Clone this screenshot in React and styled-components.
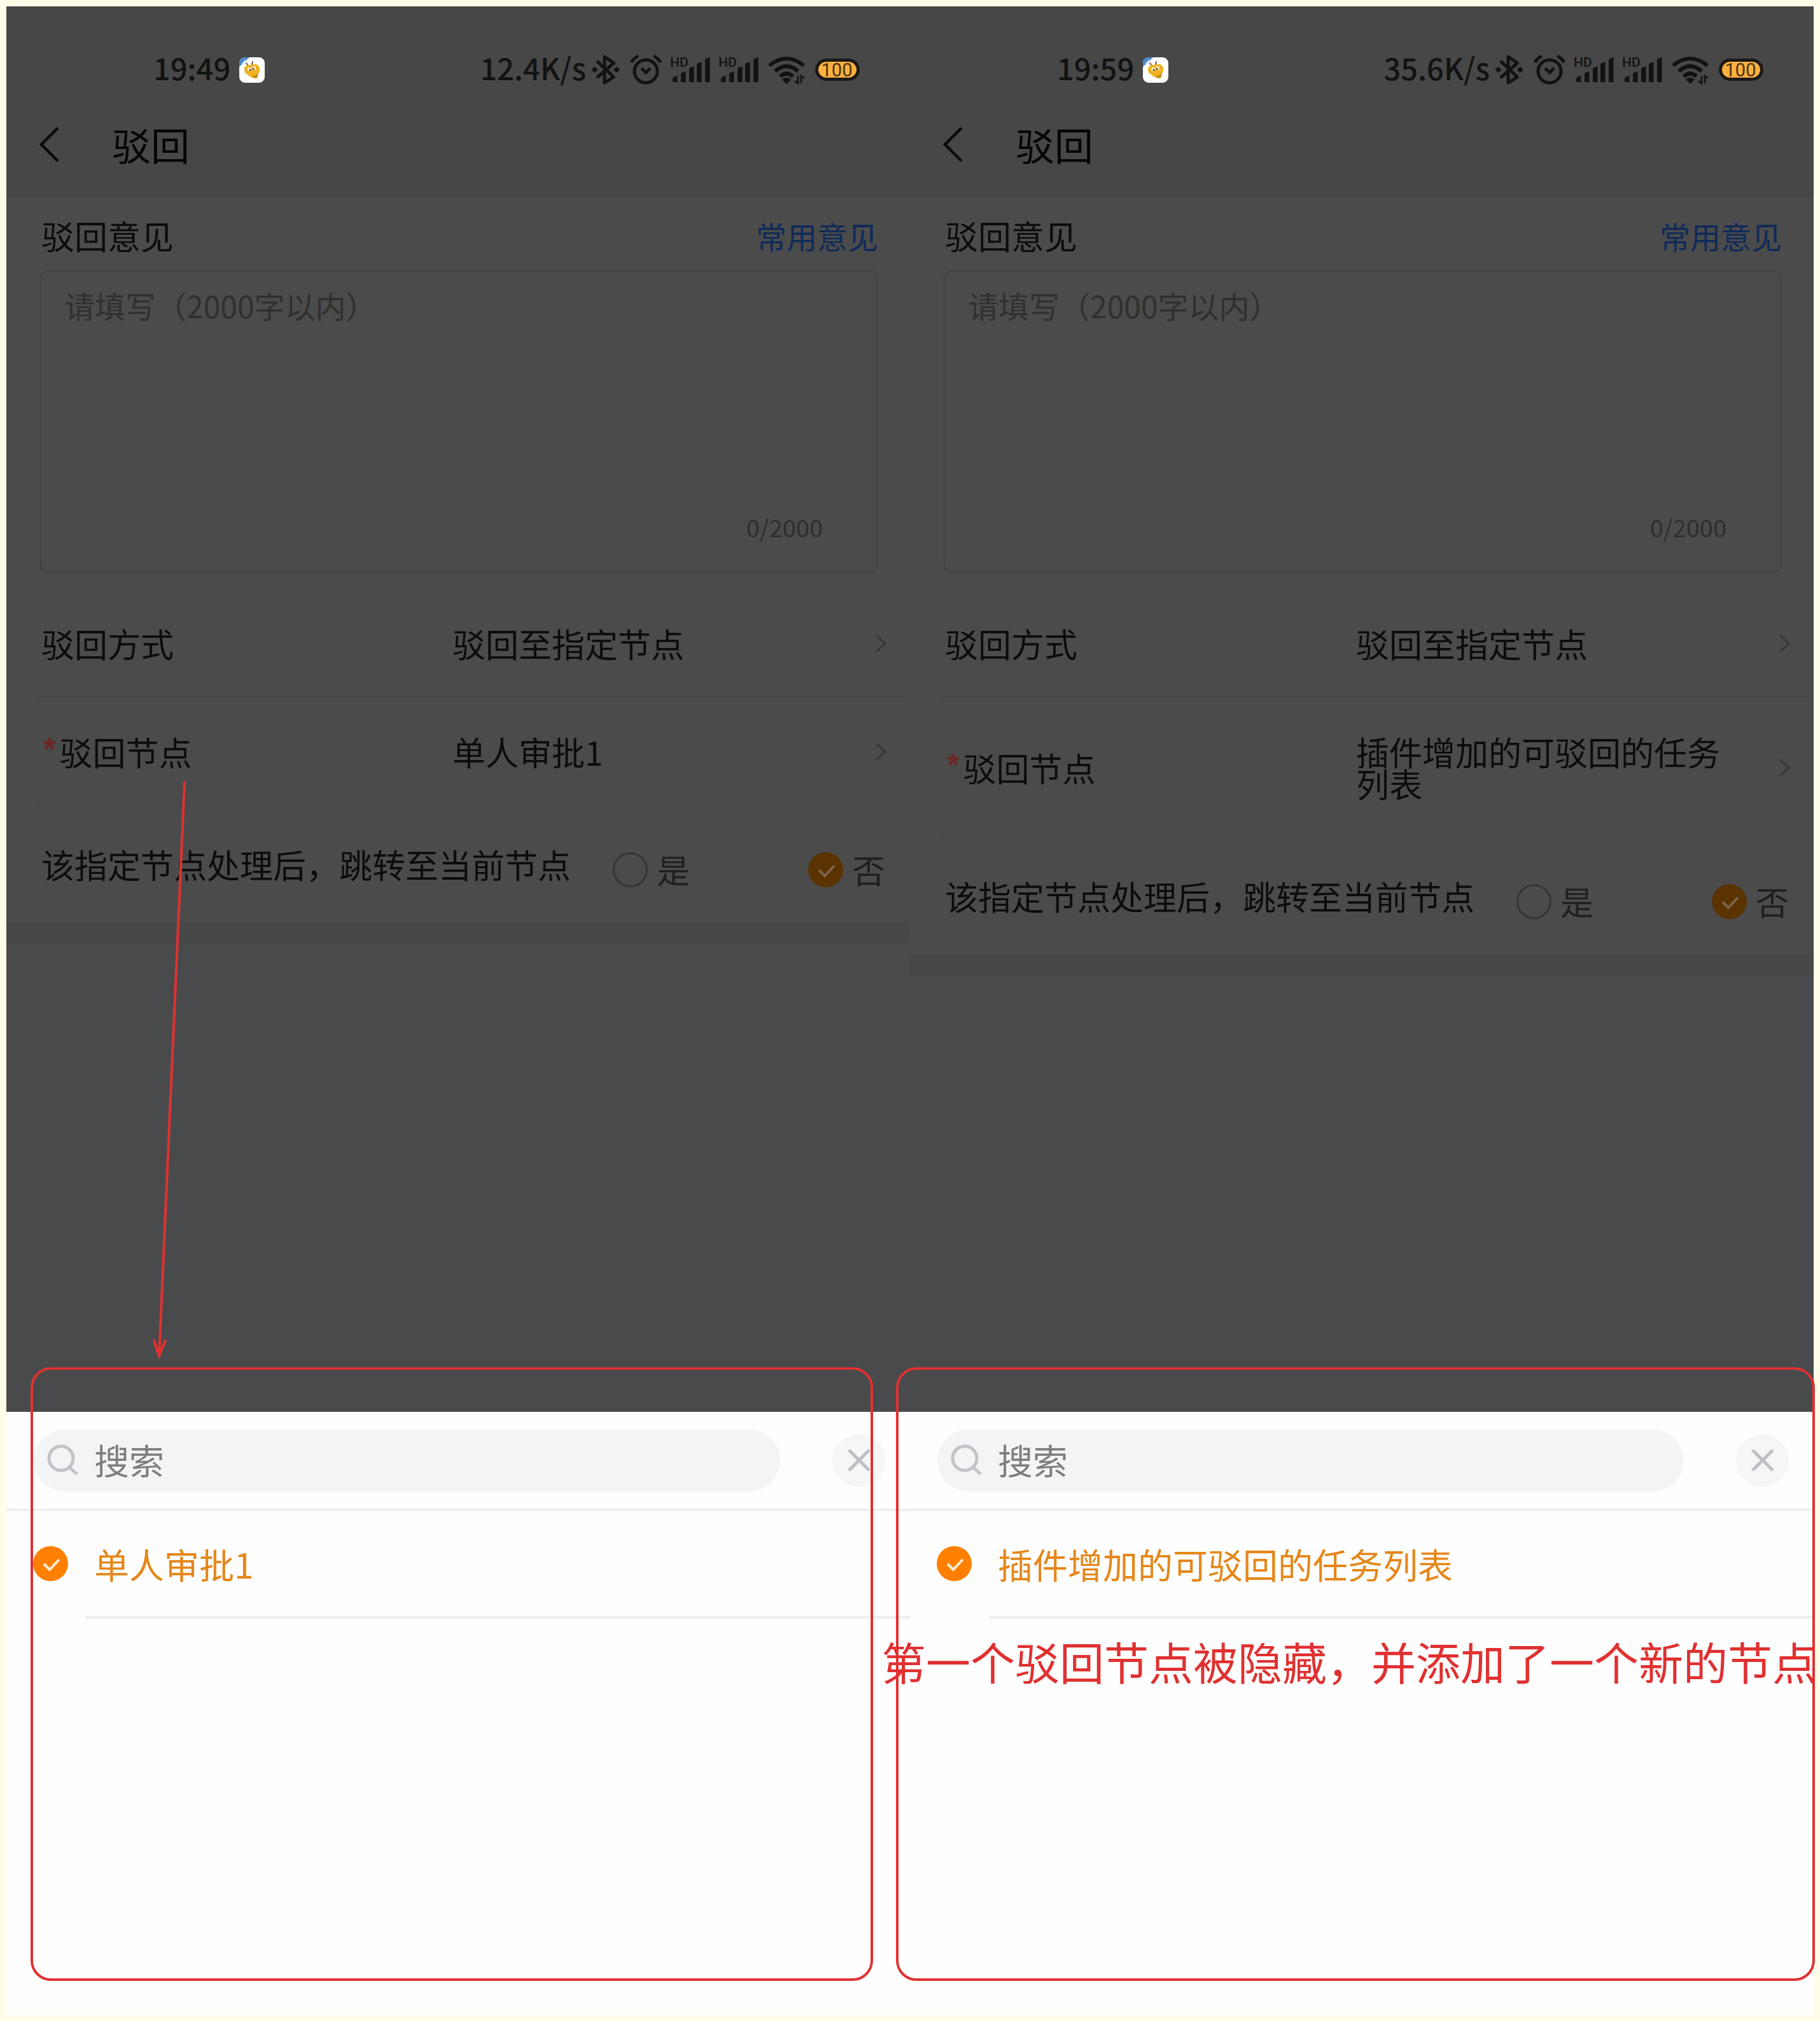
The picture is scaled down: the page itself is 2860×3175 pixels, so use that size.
import React, { useState } from 'react';
import styled, { createGlobalStyle } from 'styled-components';

const GlobalStyle = createGlobalStyle`
  * {
    box-sizing: border-box;
  }

  body {
    margin: 0;
    background: #fffde7;
    font-family: "Noto Sans CJK SC", sans-serif;
  }

  button, input, textarea {
    font-family: inherit;
    margin: 0;
  }
`;

const Board = styled.main`
  display: grid;
  grid-template-columns: 1fr 1fr;
  min-height: 100vh;
  padding: 10px 10px 9px;
`;

const Phone = styled.section`
  position: relative;
  display: flex;
  flex-direction: column;
  min-width: 0;
  background: #494a4c;
`;

const Header = styled.header`
  background: #474747;
`;

const StatusBar = styled.div`
  display: flex;
  align-items: center;
  justify-content: space-between;
  height: 142px;
  padding: 57px 78px 0 231px;
`;

const StatusGroup = styled.div`
  display: flex;
  align-items: center;
  gap: ${({ $gap }) => $gap}px;
  color: #121212;
`;

const StatusText = styled.span`
  padding-bottom: 8px;
  font-size: 47px;
  font-weight: 500;
  line-height: 60px;
`;

const StatusIcons = styled.div`
  display: flex;
  align-items: center;
  gap: 14px;

  svg {
    display: block;
    flex: none;
  }
`;

const TitleBar = styled.div`
  display: flex;
  align-items: center;
  height: 158px;
  padding: 0 0 8px 51px;
`;

const BackButton = styled.button`
  display: flex;
  padding: 0;
  border: 0;
  background: none;
  color: #0a0a0a;
`;

const TitleDivider = styled.span`
  width: 2px;
  height: 60px;
  margin: 0 27px 0 53px;
  background: #424242;
`;

const Title = styled.h1`
  margin: 0;
  color: #050505;
  font-size: 61px;
  font-weight: 400;
  line-height: 72px;
`;

const FormPanel = styled.form`
  border-bottom: 32px solid #474747;
  background: #4b4b4b;
`;

const OpinionHead = styled.div`
  display: flex;
  align-items: center;
  justify-content: space-between;
  height: 114px;
  padding: 6px 50px 0 55px;
`;

const OpinionLabel = styled.label`
  color: #0c0c0c;
  font-size: 52px;
  line-height: 60px;
`;

const CommonLink = styled.button`
  padding: 0;
  border: 0;
  background: none;
  color: #0e2a59;
  font-size: 48px;
  line-height: 60px;
`;

const OpinionBox = styled.div`
  display: flex;
  flex-direction: column;
  height: 476px;
  margin: 0 50px 26px 52px;
  padding: 22px 84px 44px 36px;
  border: 3px solid #444;
  border-radius: 14px;
`;

const OpinionInput = styled.textarea`
  flex: 1;
  padding: 0;
  border: 0;
  outline: 0;
  resize: none;
  background: none;
  color: #0c0c0c;
  font-size: 48px;
  line-height: 60px;

  &::placeholder {
    color: #303030;
    opacity: 1;
  }
`;

const Counter = styled.span`
  align-self: flex-end;
  color: #2e2e2e;
  font-size: 38px;
  line-height: 50px;
`;

const PickerRow = styled.button`
  display: grid;
  grid-template-columns: minmax(0, 646px) 1fr auto;
  align-items: center;
  width: calc(100% - 48px);
  margin-left: 48px;
  padding: 60px 36px 58px 7px;
  border: 0;
  border-bottom: 2px solid #454545;
  background: none;
  color: #0c0c0c;
  font-size: 52px;
  line-height: 50px;
  text-align: left;
`;

const PickerLabel = styled.span`
  display: flex;
  align-items: center;
  gap: 6px;
`;

const Required = styled.span`
  padding: 0 0 8px 3px;
  color: #6b2626;
  font-family: "Liberation Sans", sans-serif;
  font-size: 50px;
  font-weight: 700;
  line-height: 42px;
`;

const PickerValue = styled.span`
  padding-right: 60px;
`;

const JumpRow = styled.fieldset`
  display: flex;
  align-items: flex-start;
  height: 183px;
  margin: 0;
  padding: 67px 39px 0 55px;
  border: 0;
`;

const JumpText = styled.span`
  color: #0c0c0c;
  font-size: 52px;
  line-height: 50px;
  white-space: nowrap;
`;

const JumpChoices = styled.div`
  display: flex;
  flex: 1;
  justify-content: space-between;
  margin: 5px 0 0 66px;
`;

const Choice = styled.label`
  display: flex;
  align-items: center;
  gap: 14px;
  color: #1f1f1f;
  font-size: 52px;
  line-height: 56px;
`;

const RadioWrap = styled.span`
  position: relative;
  display: flex;
  flex: none;
  width: 55px;
  height: 55px;

  svg {
    position: absolute;
    inset: 0;
    pointer-events: none;
  }
`;

const RadioInput = styled.input`
  appearance: none;
  width: 55px;
  height: 55px;
  border: 3px solid #353535;
  border-radius: 50%;

  &:checked {
    border: 0;
    background: ${({ $fill }) => $fill};
  }
`;

const Sheet = styled.div`
  position: relative;
  min-height: 948px;
  margin-top: auto;
  background: #fefefe;
`;

const SearchRow = styled.div`
  display: flex;
  align-items: center;
  gap: 82px;
  height: 156px;
  padding: 0 39px 0 43px;
  border-bottom: 4px solid #eee;
`;

const SearchBox = styled.label`
  display: flex;
  flex: 1;
  align-items: center;
  gap: 25px;
  height: 97px;
  padding: 0 40px 0 21px;
  border-radius: 49px;
  background: #f3f4f6;
`;

const SearchInput = styled.input`
  flex: 1;
  min-width: 0;
  height: 70px;
  padding: 0 0 4px;
  border: 0;
  outline: 0;
  background: none;
  color: #333;
  font-size: 55px;
  line-height: 66px;

  &::placeholder {
    color: #7c7e80;
    opacity: 1;
  }
`;

const CloseButton = styled.button`
  display: flex;
  align-items: center;
  justify-content: center;
  width: 83px;
  height: 83px;
  padding: 0;
  border: 0;
  border-radius: 50%;
  background: #f6f6f6;
`;

const Option = styled.label`
  display: flex;
  align-items: center;
  gap: 41px;
  height: 165px;
  padding-left: 42px;
  color: #e5871a;
  font-size: 55px;
  line-height: 70px;
`;

const OptionText = styled.span`
  padding-bottom: 2px;
`;

const OptionDivider = styled.hr`
  height: 4px;
  margin: 0 0 0 124px;
  border: 0;
  background: #eee;
`;

/* red markup drawn over the two screens */
const Frame = styled.div`
  position: absolute;
  top: -70px;
  right: ${({ $right }) => $right}px;
  bottom: 54px;
  left: ${({ $left }) => $left}px;
  border: 4px solid #e03131;
  border-radius: 32px;
  pointer-events: none;
`;

/* runs from the node row down to the sheet, so it starts above the sheet's top edge */
const Arrow = styled.svg`
  position: absolute;
  top: -998px;
  left: 220px;
  pointer-events: none;
`;

const Note = styled.p`
  position: absolute;
  top: 347px;
  left: -45px;
  margin: 0;
  color: #e03131;
  font-size: 70px;
  line-height: 90px;
  white-space: nowrap;
`;

const AppBadge = () => (
  <svg width="40" height="40" viewBox="0 0 40 40">
    <defs>
      <clipPath id="badge">
        <rect width="40" height="40" rx="9" />
      </clipPath>
    </defs>
    <g clipPath="url(#badge)">
      <rect width="40" height="40" fill="#fff" />
      <path d="M0 0H16L0 15Z" fill="#4a86cf" />
      <path d="M4 10L10 4" stroke="#a9c8ec" strokeWidth="2" />
      <path d="M13 12L11 9M20 11L21 7" stroke="#6b5a4a" strokeWidth="2" strokeLinecap="round" />
      <path
        d="M8 19C8 13 14 11 20 12C23 10 31 10 32 17C33 22 30 25 29 28C30 32 26 34 22 32C18 32 15 29 13 27C10 26 8 23 8 19Z"
        fill="#f0b322"
      />
      <path d="M20 30C24 29 28 27 30 24C29 28 30 32 26 33C23 33 21 32 20 30Z" fill="#c98c14" />
      <circle cx="16" cy="19" r="3" fill="#fff3cf" />
      <circle cx="23" cy="17" r="3" fill="#fff3cf" />
      <circle cx="17" cy="20" r="1.5" fill="#4b3410" />
      <circle cx="22" cy="18" r="1.5" fill="#4b3410" />
    </g>
  </svg>
);

const BluetoothIcon = () => (
  <svg width="46" height="50" viewBox="0 0 46 50" fill="none" stroke="currentColor" strokeWidth="5">
    <path d="M8 11L34.5 36L20 45V4L34.5 14L8 37" strokeLinejoin="round" />
    <path d="M4.5 19.5L9.5 24.5L4.5 29.5L-.5 24.5ZM39 19.500L44 24.500L39 29.500L34 24.500Z" fill="currentColor" stroke="none" />
  </svg>
);

const AlarmIcon = () => (
  <svg width="50" height="50" viewBox="0 0 50 50" fill="none" stroke="currentColor" strokeWidth="5">
    <circle cx="25" cy="27" r="18" />
    <path d="M18 22L25 29L32 22" />
    <path d="M2 13Q6 6 13 3M48 13Q44 6 37 3" />
  </svg>
);

const SignalIcon = () => (
  <svg width="62" height="50" viewBox="0 0 62 50" fill="currentColor">
    <text x="-1" y="20" fontFamily="Roboto, sans-serif" fontSize="21" fontWeight="500">HD</text>
    <path d="M3 44V38Q3 36 10.500 34V44ZM16 44V30L23.500 27V44ZM29 44V22L36.500 19V44ZM41 44V15L48.500 12V44ZM54 44V8L61.500 5V44Z" />
  </svg>
);

const WifiIcon = () => (
  <svg width="60" height="50" viewBox="0 0 60 50" fill="none" stroke="currentColor" strokeWidth="6">
    <path d="M3 18Q30 -4 57 18M12 27Q30 11 48 27M20 35Q30 26 40 35" />
    <path d="M23 40Q30 34 37 40L30 47Z" fill="currentColor" stroke="none" />
    <path d="M48 34V46L43 42M53 46V34L58 38" strokeWidth="2.5" />
  </svg>
);

const BatteryIcon = () => (
  <svg width="72" height="50" viewBox="0 0 72 50">
    <rect x="3.500" y="9.500" width="65" height="30" rx="15" fill="#fbb040" stroke="#1b1917" strokeWidth="5" />
    <text x="35" y="35" textAnchor="middle" fontFamily="Roboto, sans-serif" fontSize="29" fill="#4a3210">
      100
    </text>
  </svg>
);

const Chevron = () => (
  <svg width="20" height="32" viewBox="0 0 20 32" fill="none" stroke="#363636" strokeWidth="3">
    <path d="M3 3L17 16L3 29" />
  </svg>
);

const SearchIcon = () => (
  <svg width="49" height="50" viewBox="0 0 49 50" fill="none" stroke="#c1c3c9" strokeWidth="5">
    <circle cx="22" cy="22" r="19" />
    <path d="M35 36L47 47" />
  </svg>
);

const CloseIcon = () => (
  <svg width="36" height="36" viewBox="0 0 36 36" stroke="#bdbfc4" strokeWidth="5">
    <path d="M2 2L34 34M34 2L2 34" />
  </svg>
);

const Radio = ({ fill, tick, checked, ...rest }) => (
  <RadioWrap>
    <RadioInput type="radio" $fill={fill} checked={checked} {...rest} />
    {checked && (
      <svg width="55" height="55" viewBox="0 0 55 55" fill="none" stroke={tick} strokeWidth="4">
        <path d="M17 28L26 37L41 21" />
      </svg>
    )}
  </RadioWrap>
);

const RejectScreen = ({ id, time, speed, node, children, frame }) => {
  const [jump, setJump] = useState('no');
  const [opinion, setOpinion] = useState('');

  return (
    <Phone>
      <Header>
        <StatusBar>
          <StatusGroup $gap={14}>
            <StatusText>{time}</StatusText>
            <AppBadge />
          </StatusGroup>
          <StatusGroup $gap={9}>
            <StatusText>{speed}</StatusText>
            <StatusIcons>
              <BluetoothIcon />
              <AlarmIcon />
              <SignalIcon />
              <SignalIcon />
              <WifiIcon />
              <BatteryIcon />
            </StatusIcons>
          </StatusGroup>
        </StatusBar>
        <TitleBar>
          <BackButton type="button" aria-label="返回">
            <svg width="33" height="56" viewBox="0 0 33 56" fill="none" stroke="currentColor" strokeWidth="4.5">
              <path d="M30 2L4 28L30 54" />
            </svg>
          </BackButton>
          <TitleDivider />
          <Title>驳回</Title>
        </TitleBar>
      </Header>

      <FormPanel onSubmit={e => e.preventDefault()}>
        <OpinionHead>
          <OpinionLabel htmlFor={`${id}-opinion`}>驳回意见</OpinionLabel>
          <CommonLink type="button">常用意见</CommonLink>
        </OpinionHead>
        <OpinionBox>
          <OpinionInput
            id={`${id}-opinion`}
            maxLength={2000}
            placeholder="请填写（2000字以内）"
            value={opinion}
            onChange={e => setOpinion(e.target.value)}
          />
          <Counter>{opinion.length}/2000</Counter>
        </OpinionBox>

        <PickerRow type="button">
          <PickerLabel>驳回方式</PickerLabel>
          <PickerValue>驳回至指定节点</PickerValue>
          <Chevron />
        </PickerRow>
        <PickerRow type="button">
          <PickerLabel>
            <Required>*</Required>
            驳回节点
          </PickerLabel>
          <PickerValue>{node}</PickerValue>
          <Chevron />
        </PickerRow>

        <JumpRow aria-labelledby={`${id}-jump`}>
          <JumpText id={`${id}-jump`}>该指定节点处理后，跳转至当前节点</JumpText>
          <JumpChoices>
            <Choice>
              <Radio
                name={`${id}-jump`}
                fill="#5a3300"
                tick="#7d6350"
                checked={jump === 'yes'}
                onChange={() => setJump('yes')}
              />
              是
            </Choice>
            <Choice>
              <Radio
                name={`${id}-jump`}
                fill="#5a3300"
                tick="#7d6350"
                checked={jump === 'no'}
                onChange={() => setJump('no')}
              />
              否
            </Choice>
          </JumpChoices>
        </JumpRow>
      </FormPanel>

      <Sheet>
        <SearchRow>
          <SearchBox>
            <SearchIcon />
            <SearchInput type="text" placeholder="搜索" aria-label="搜索" />
          </SearchBox>
          <CloseButton type="button" aria-label="关闭">
            <CloseIcon />
          </CloseButton>
        </SearchRow>
        <Option>
          <Radio name={`${id}-node`} fill="#ff8000" tick="#fff0d8" checked readOnly />
          <OptionText>{node}</OptionText>
        </Option>
        <OptionDivider />
        <Frame $left={frame.left} $right={frame.right} />
        {children}
      </Sheet>
    </Phone>
  );
};

const App = () => {
  return (
    <>
      <GlobalStyle />
      <Board>
        <RejectScreen id="before" time="19:49" speed="12.4K/s" node="单人审批1" frame={{ left: 38, right: 58 }}>
          <Arrow
            width="80"
            height="920"
            viewBox="0 0 80 920"
            fill="none"
            stroke="#e03131"
            strokeWidth="4"
            strokeLinecap="round"
          >
            <path d="M60 9L20 910M12 886L20 910L30 886" />
          </Arrow>
        </RejectScreen>
        <RejectScreen
          id="after"
          time="19:59"
          speed="35.6K/s"
          node="插件增加的可驳回的任务列表"
          frame={{ left: -22, right: -2 }}
        >
          <Note>第一个驳回节点被隐藏，并添加了一个新的节点</Note>
        </RejectScreen>
      </Board>
    </>
  );
};

export default App;
